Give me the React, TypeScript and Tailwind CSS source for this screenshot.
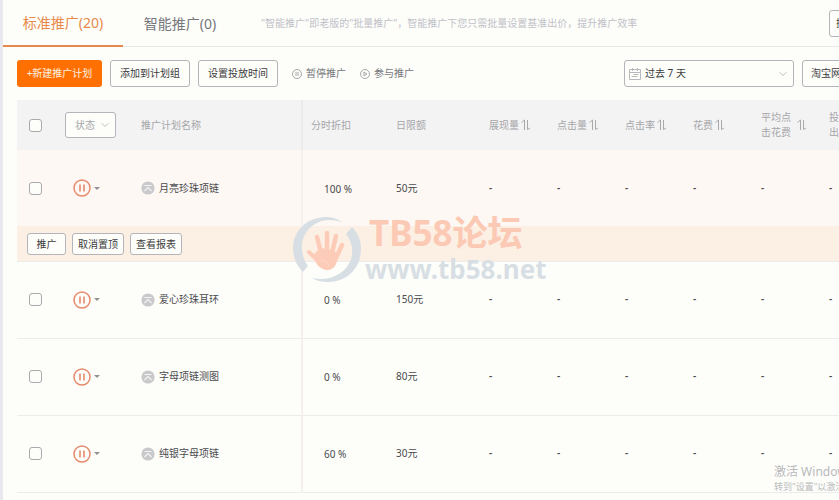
import type { ReactNode } from 'react';
import { ChevronDown } from 'lucide-react';

const metrics = ['展现量', '点击量', '点击率', '花费'];

const plans = [
    { id: 1, name: '月亮珍珠项链', discount: '100 %', budget: '50元', pinned: true },
    { id: 2, name: '爱心珍珠耳环', discount: '0 %', budget: '150元', pinned: false },
    { id: 3, name: '字母项链测图', discount: '0 %', budget: '80元', pinned: false },
    { id: 4, name: '纯银字母项链', discount: '60 %', budget: '30元', pinned: false },
];

function Checkbox({ label }: { label: string }) {
    return (
        <input
            type="checkbox"
            aria-label={label}
            className="block size-[13px] appearance-none rounded-[3px] border border-[#a9a9ae] bg-[#fdfefa] checked:bg-[#ff7000]"
        />
    );
}

function OutlineButton({ children, className }: { children: ReactNode; className: string }) {
    return (
        <button className={`shrink-0 whitespace-nowrap rounded-[3px] border border-[#b4b4ba] bg-[#fdfefa] text-[#3c3c40] ${className}`}>
            {children}
        </button>
    );
}

function SortIcon() {
    return (
        <svg width="10" height="12" viewBox="0 0 10 12" fill="none" stroke="#a9a9ac" aria-hidden="true">
            <path d="M.5 3.5 3.5 1v10M6.5 1v9.5L9 9" />
        </svg>
    );
}

function PauseCircle() {
    return (
        <svg width="18" height="18" viewBox="0 0 18 18" fill="none" stroke="#e58a6c" aria-hidden="true">
            <circle cx="9" cy="9" r="8" strokeWidth="1.5" />
            <path d="M7 5.5v7M11 5.5v7" strokeWidth="1.6" />
        </svg>
    );
}

function PinIcon() {
    return (
        <svg width="14" height="14" viewBox="0 0 14 14" fill="none" aria-hidden="true">
            <circle cx="7" cy="7" r="6.6" fill="#c9c9cb" />
            <path d="M3.5 4.5h7M3.5 10 7 6.5l3.5 3.5" stroke="#f4f4f4" strokeWidth="1.2" />
        </svg>
    );
}

function CalendarIcon() {
    return (
        <svg width="12" height="12" viewBox="0 0 12 12" fill="none" stroke="#b9b9bd" aria-hidden="true">
            <path d="M.5 1.5h11v10H.5zM.5 4.5h11M3.5 0v3M8.5 0v3M4.5 6.5h5M2.5 8.5h6" />
        </svg>
    );
}

function Watermark() {
    return (
        <div className="pointer-events-none absolute left-[293px] top-[216px] flex" aria-hidden="true">
            <svg width="68" height="68" viewBox="0 0 68 68">
                <path d="M49 6C43 2 38 1 33 1 14 1 0 15 0 32c0 10 4 18 10 24l5-6C5 36 7 17 22 8c8-5 17-5 27-2z" fill="#d8dfe4" />
                <path d="M53 18l6-7c6 6 9 13 9 22 0 19-14 33-33 33-6 0-11-1-16-4 10 2 18 1 25-3 16-8 20-27 9-41z" fill="#d8dfe4" />
                <g fill="none" stroke="#fcccb9" strokeLinecap="round">
                    <path d="M26 46 16 36" strokeWidth="4" />
                    <path d="M28 37 24 21" strokeWidth="4.5" />
                    <path d="M34 35V17" strokeWidth="4.5" />
                    <path d="M39 37l4-17" strokeWidth="4.5" />
                    <path d="M43 42l6-13" strokeWidth="4.5" />
                </g>
                <path d="M26 33c6-2 14 0 19 5 0 5-1 8-3 12-3 5-10 5-14 2-4-2-6-7-8-13z" fill="#fcccb9" />
                <path d="M28 45c4-1 7 1 8 5" fill="none" stroke="#fddcc5" />
            </svg>
            <div className="-mt-px pl-1 font-bold">
                <div className="pl-1 text-[35px] leading-[36px] text-[#fbc9b4]">TB58论坛</div>
                <div className="text-[26px] leading-[36px] text-[#d8dfe4]">www.tb58.net</div>
            </div>
        </div>
    );
}

export default function App() {
    return (
        <div className="relative flex min-h-screen overflow-hidden bg-[#fdfefa] font-['Noto_Sans','Noto_Sans_CJK_SC',sans-serif] text-[10px] leading-[15px] text-[#4a4a4e]">
            <div className="w-[3px] shrink-0 bg-[#e8e9ee]" />
            <main className="min-w-[940px] flex-1">
                <nav className="flex h-[47px] items-center border-b border-[#e8e8e8]">
                    <a href="#standard" className="flex h-[47px] w-[120px] shrink-0 items-center justify-center border-b-2 border-[#e58a4c] text-[14px] text-[#e8894a]">
                        标准推广(20)
                    </a>
                    <a href="#smart" className="flex w-[114px] shrink-0 items-center justify-center text-[14px] text-[#77777a]">
                        智能推广(0)
                    </a>
                    <p className="ml-6 whitespace-nowrap text-[#c1c1c8]">
                        "智能推广"即老版的"批量推广"，智能推广下您只需批量设置基准出价，提升推广效率
                    </p>
                    <OutlineButton className="ml-auto mr-4 h-[27px] w-[98px] px-[6px] text-left">操作记录</OutlineButton>
                </nav>

                <section className="flex items-center gap-2 py-[13px] pl-[14px] pr-4">
                    <button className="h-[27px] w-[85px] shrink-0 rounded-[3px] bg-[#ff7000] text-[#fff1e2]">+新建推广计划</button>
                    <OutlineButton className="h-[27px] w-20">添加到计划组</OutlineButton>
                    <OutlineButton className="h-[27px] w-20">设置投放时间</OutlineButton>
                    <button className="ml-[6px] flex items-center gap-1 text-[#77777a]">
                        <svg width="10" height="10" viewBox="0 0 10 10" fill="none" stroke="#929296" aria-hidden="true">
                            <circle cx="5" cy="5" r="4.5" strokeWidth=".8" />
                            <path d="M4 3v4M6 3v4" strokeWidth=".8" />
                        </svg>
                        暂停推广
                    </button>
                    <button className="ml-[6px] flex items-center gap-1 text-[#77777a]">
                        <svg width="10" height="10" viewBox="0 0 10 10" fill="none" stroke="#929296" aria-hidden="true">
                            <circle cx="5" cy="5" r="4.5" strokeWidth=".8" />
                            <path d="M4 3v4l3-2z" strokeWidth=".8" />
                        </svg>
                        参与推广
                    </button>
                    <button className="ml-auto flex h-[27px] w-[170px] shrink-0 items-center gap-1 rounded-[3px] border border-[#b4b4ba] px-1 text-[#3c3c40]">
                        <CalendarIcon />
                        过去 7 天
                        <ChevronDown className="ml-auto size-3 text-[#a9a9ac]" strokeWidth={1.5} />
                    </button>
                    <select aria-label="平台" className="h-[27px] w-[125px] appearance-none rounded-[3px] border border-[#b4b4ba] px-2 text-[#3c3c40]">
                        <option>淘宝网</option>
                    </select>
                </section>

                <div className="pl-[14px]">
                    <table className="w-full table-fixed border-collapse text-left">
                        <colgroup>
                            <col className="w-[37px]" />
                            <col className="w-[76px]" />
                            <col className="w-[172px]" />
                            <col className="w-[85px]" />
                            <col className="w-[93px]" />
                            <col className="w-[68px]" />
                            <col className="w-[68px]" />
                            <col className="w-[68px]" />
                            <col className="w-[68px]" />
                            <col className="w-[68px]" />
                            <col />
                        </colgroup>
                        <thead className="bg-[#f3f3f4] text-[#a6a6a9]">
                            <tr className="h-[50px]">
                                <th className="pl-3"><Checkbox label="全选" /></th>
                                <th className="pl-[11px] font-normal">
                                    <button className="flex h-[26px] w-[51px] items-center justify-between rounded-[3px] border border-[#b4b4ba] bg-[#fdfefa] pl-[9px] pr-1">
                                        状态
                                        <ChevronDown className="size-3" strokeWidth={1.5} />
                                    </button>
                                </th>
                                <th className="border-r-2 border-[#ebebec] pl-[11px] font-normal">推广计划名称</th>
                                <th className="pl-2 font-normal">分时折扣</th>
                                <th className="pl-[9px] font-normal">日限额</th>
                                {metrics.map((m) => (
                                    <th key={m} className="pl-[9px] font-normal">
                                        <span className="flex items-center gap-[2px]">{m}<SortIcon /></span>
                                    </th>
                                ))}
                                <th className="pl-[9px] font-normal">
                                    <span className="flex items-center gap-[6px]">
                                        <span className="shrink-0">平均点<br />击花费</span>
                                        <SortIcon />
                                    </span>
                                </th>
                                <th className="pl-[9px] font-normal">投入产<br />出比</th>
                            </tr>
                        </thead>
                        {plans.map((plan) => (
                            <tbody key={plan.id} className="border-b border-[#ececec]">
                                <tr className={plan.pinned ? 'h-[76px] bg-[#fdf8f3]' : 'h-[77px]'}>
                                    <td className="pl-3"><Checkbox label={plan.name} /></td>
                                    <td className="pl-[19px]">
                                        <button aria-label="暂停" className="flex items-center gap-[3px]">
                                            <PauseCircle />
                                            <svg width="6" height="3" viewBox="0 0 6 3" fill="#929296" aria-hidden="true">
                                                <path d="M0 0h6L3 3z" />
                                            </svg>
                                        </button>
                                    </td>
                                    <td className="border-r-2 border-[#f3f0ee] pl-[11px]">
                                        <span className="flex items-center gap-1"><PinIcon />{plan.name}</span>
                                    </td>
                                    <td className="pl-[21px] pt-[2px]">{plan.discount}</td>
                                    <td className="pl-[9px]">{plan.budget}</td>
                                    {[0, 1, 2, 3, 4, 5].map((i) => (
                                        <td key={i} className="pl-[9px] font-semibold">-</td>
                                    ))}
                                </tr>
                                {plan.pinned && (
                                    <tr className="h-[35px] bg-[#fcf0e4]">
                                        <td colSpan={11} className="pl-[10px] pt-[2px]">
                                            <div className="flex gap-[6px]">
                                                <OutlineButton className="h-[22px] w-[39px]">推广</OutlineButton>
                                                <OutlineButton className="h-[22px] w-[52px]">取消置顶</OutlineButton>
                                                <OutlineButton className="h-[22px] w-[52px]">查看报表</OutlineButton>
                                            </div>
                                        </td>
                                    </tr>
                                )}
                            </tbody>
                        ))}
                    </table>
                </div>
            </main>

            <Watermark />
            <div className="pointer-events-none absolute left-[774px] top-[463px] whitespace-nowrap text-[#b9b9bb]">
                <div className="text-[12px] leading-[17px]">激活 Windows</div>
                <div className="text-[9px] leading-[13px]">转到"设置"以激活 Windows。</div>
            </div>
        </div>
    );
}
